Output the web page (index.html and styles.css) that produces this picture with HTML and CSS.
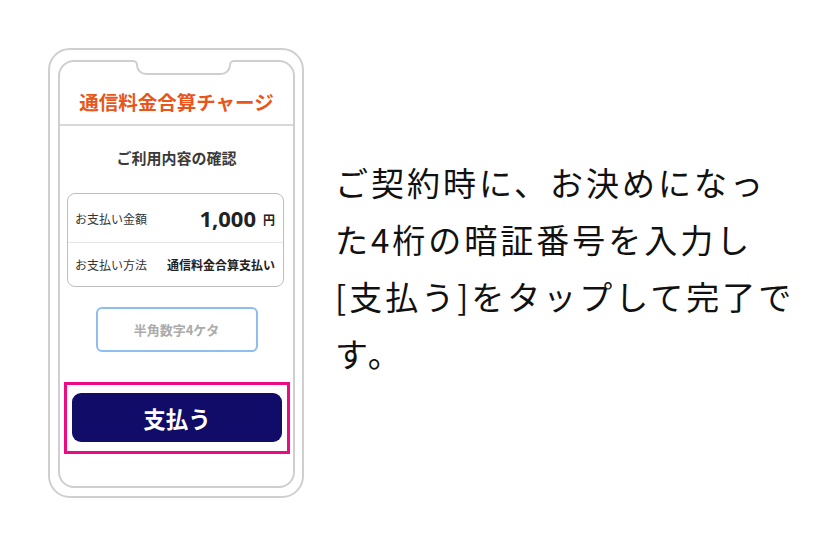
FILE: index.html
```html
<!DOCTYPE html>
<html lang="ja">
<head>
<meta charset="utf-8">
<title>通信料金合算チャージ</title>
<link rel="stylesheet" href="styles.css">
</head>
<body>
<div class="page">
  <div class="phone">
    <div class="screen">
      <svg class="notch" width="107" height="17" viewBox="0 0 107 17" aria-hidden="true">
        <path d="M0 0 V1 H3 A4 4 0 0 1 7 5 A9 9 0 0 0 16 14 H91 A9 9 0 0 0 100 5 A4 4 0 0 1 104 1 H107 V0 Z" fill="#fff"/>
        <path d="M0 1 H3 A4 4 0 0 1 7 5 A9 9 0 0 0 16 14 H91 A9 9 0 0 0 100 5 A4 4 0 0 1 104 1 H107" fill="none" stroke="#cfcfcf" stroke-width="2"/>
      </svg>
      <div class="head">通信料金合算チャージ</div>
      <div class="title">ご利用内容の確認</div>
      <div class="card">
        <div class="row row-amount">
          <span class="label">お支払い金額</span>
          <span class="amount">1,000<span class="yen">円</span></span>
        </div>
        <div class="row row-method">
          <span class="label">お支払い方法</span>
          <span class="method">通信料金合算支払い</span>
        </div>
      </div>
      <div class="pin">半角数字4ケタ</div>
      <div class="highlight">
        <div class="pay">支払う</div>
      </div>
    </div>
  </div>
  <p class="caption">ご契約時に、お決めになっ<br>た4桁の暗証番号を入力し<br>[支払う]をタップして完了で<br>す。</p>
</div>
</body>
</html>
```
FILE: styles.css
```css
html, body {
  margin: 0;
  padding: 0;
  background: #fff;
}

body {
  font-family: "Noto Sans CJK JP", "Noto Sans", sans-serif;
  color: #333;
}

.page {
  display: flex;
  align-items: flex-start;
  padding: 48px 0 0 48px;
}

.phone {
  width: 256px;
  height: 450px;
  box-sizing: border-box;
  border: 2px solid #cfcfcf;
  border-radius: 22px;
  padding: 10px 7px 8px 8px;
  flex: none;
}

.screen {
  position: relative;
  height: 100%;
  box-sizing: border-box;
  border: 2px solid #cfcfcf;
  border-radius: 16px;
  display: flex;
  flex-direction: column;
}

.notch {
  position: absolute;
  top: -2px;
  left: 70px;
  display: block;
}

.head {
  padding: 26px 0 8px;
  line-height: 28px;
  font-size: 19.5px;
  font-weight: 700;
  color: #e8561c;
  text-align: center;
  border-bottom: 2px solid #d8d8d8;
}

.title {
  margin-top: 22px;
  line-height: 20px;
  font-size: 15px;
  font-weight: 700;
  color: #3a3a3a;
  text-align: center;
}

.card {
  margin: 25px 0 0 7px;
  width: 217px;
  box-sizing: border-box;
  border: 1px solid #bdbdbd;
  border-radius: 8px;
}

.row {
  display: flex;
  align-items: center;
  justify-content: space-between;
  padding: 0 8px 0 7px;
}

.row-amount {
  height: 48px;
  border-bottom: 1px solid #e6e6e6;
}

.row-method {
  height: 43px;
}

.label {
  font-size: 12px;
  color: #333;
}

.amount {
  font-family: "Noto Sans", "Noto Sans CJK JP", sans-serif;
  font-size: 22px;
  font-weight: 700;
  color: #222;
  display: flex;
  align-items: center;
}

.yen {
  font-family: "Noto Sans CJK JP", sans-serif;
  font-size: 12px;
  margin-left: 7px;
  margin-top: 3px;
}

.method {
  font-size: 12px;
  font-weight: 700;
  color: #222;
}

.pin {
  align-self: center;
  margin-top: 20px;
  width: 162px;
  height: 45px;
  box-sizing: border-box;
  border: 2px solid #8fbdf0;
  border-radius: 6px;
  display: flex;
  align-items: center;
  justify-content: center;
  font-size: 13px;
  font-weight: 700;
  color: #ababab;
}

.highlight {
  margin: 30px 0 0 4px;
  width: 226px;
  box-sizing: border-box;
  border: 3px solid #ee0a82;
  padding: 8px 5px 9px;
}

.pay {
  height: 49px;
  border-radius: 9px;
  background: #100c67;
  color: #fff;
  font-size: 22.5px;
  font-weight: 700;
  display: flex;
  align-items: center;
  justify-content: center;
}

.caption {
  margin: 106px 0 0 31px;
  font-size: 33px;
  line-height: 57px;
  letter-spacing: 3px;
  color: #111;
  white-space: nowrap;
}
```
